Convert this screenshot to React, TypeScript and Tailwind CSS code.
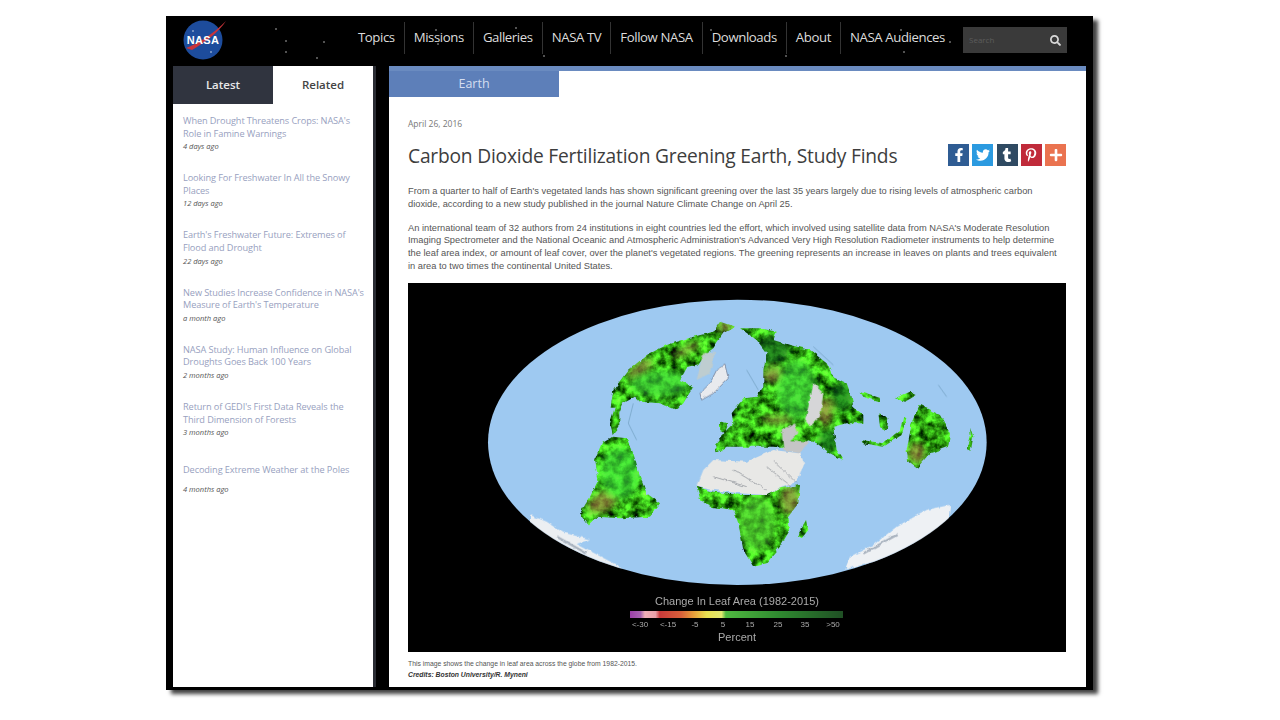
import { FaFacebookF, FaTwitter, FaTumblr, FaPinterestP, FaPlus, FaSearch } from 'react-icons/fa';

const navItems = ['Topics', 'Missions', 'Galleries', 'NASA TV', 'Follow NASA', 'Downloads', 'About', 'NASA Audiences'];

const related = [
  { title: "When Drought Threatens Crops: NASA's Role in Famine Warnings", when: '4 days ago' },
  { title: 'Looking For Freshwater In All the Snowy Places', when: '12 days ago' },
  { title: "Earth's Freshwater Future: Extremes of Flood and Drought", when: '22 days ago' },
  { title: "New Studies Increase Confidence in NASA's Measure of Earth's Temperature", when: 'a month ago' },
  { title: 'NASA Study: Human Influence on Global Droughts Goes Back 100 Years', when: '2 months ago' },
  { title: "Return of GEDI's First Data Reveals the Third Dimension of Forests", when: '3 months ago' },
];

const stars = [
  [110, 13], [120, 25], [158, 26], [120, 36], [151, 42], [270, 14], [272, 28], [350, 12], [378, 40], [545, 14], [553, 29], [735, 14], [738, 36], [784, 26], [620, 40],
];

function Logo() {
  return (
    <svg width="46" height="42" viewBox="0 0 46 42">
      <circle cx="20" cy="22" r="19.5" fill="#1d4c9c" />
      <circle cx="10" cy="13" r="0.7" fill="#fff" />
      <circle cx="28" cy="34" r="0.7" fill="#fff" />
      <path d="M3 30 C14 26 30 16 43 3 C36 14 22 24 9 32 Z" fill="#c9343a" />
      <text x="20" y="26" textAnchor="middle" fontSize="11" fontWeight="700" fill="#fff" fontFamily="Liberation Sans, sans-serif" letterSpacing="0.3">NASA</text>
    </svg>
  );
}

function Nav() {
  return (
    <div className="relative flex h-[50px] items-center bg-black pb-[7px] pl-[17px] pr-[26px]">
      <svg className="absolute inset-0" width="920" height="50">
        {stars.map(([x, y]) => (
          <circle key={`${x}-${y}`} cx={x} cy={y} r="0.8" fill="#bbb" />
        ))}
      </svg>
      <div className="relative mt-[3px]"><Logo /></div>
      <nav className="relative ml-auto flex items-center">
        {navItems.map((item, i) => (
          <a
            key={item}
            className={`flex h-[32px] items-center px-[9px] font-['Open_Sans',sans-serif] text-[13.2px] tracking-[-0.4px] text-[#dcdcdc] ${i > 0 ? 'border-l border-[#333]' : ''}`}
          >
            {item}
          </a>
        ))}
      </nav>
      <div className="relative ml-[9px] mt-[5px] flex h-[26px] w-[104px] items-center justify-between bg-[#3a3a3a] pl-[6px] pr-[6px]">
        <span className="font-['Open_Sans',sans-serif] text-[8px] text-[#5c5c5c]">Search</span>
        <FaSearch className="text-[11px] text-[#d8d8d8]" />
      </div>
    </div>
  );
}

function Sidebar() {
  return (
    <aside className="flex w-[200px] flex-col bg-white font-['Open_Sans',sans-serif]">
      <div className="flex h-[38px] text-[11.5px]">
        <div className="flex w-[100px] items-center justify-center bg-[#30343f] font-semibold text-[#e8e8e8]">Latest</div>
        <div className="flex w-[100px] items-center justify-center font-semibold text-[#444]">Related</div>
      </div>
      <ul className="flex flex-col gap-[20px] pl-[10px] pr-[8px] pt-[11px]">
        {related.map(r => (
          <li key={r.title}>
            <p className="text-[9.2px] leading-[12.6px] tracking-[-0.1px] text-[#989fc0]">{r.title}</p>
            <p className="text-[7.5px] italic leading-[12px] text-[#555]">{r.when}</p>
          </li>
        ))}
        <li className="pt-[6px]">
          <p className="text-[9.2px] leading-[12.6px] tracking-[-0.1px] text-[#989fc0]">Decoding Extreme Weather at the Poles</p>
          <p className="mt-[6px] text-[7.5px] italic leading-[12px] text-[#555]">4 months ago</p>
        </li>
      </ul>
    </aside>
  );
}

function LeafMap() {
  const legendLabels: [number, string][] = [[232, '<-30'], [260, '<-15'], [287, '-5'], [315, '5'], [342, '15'], [370, '25'], [397, '35'], [425, '>50']];
  return (
    <svg className="block" width="658" height="369" viewBox="0 0 658 369">
      <defs>
        <filter id="rough" x="-5%" y="-5%" width="110%" height="110%">
          <feTurbulence type="fractalNoise" baseFrequency="0.05" numOctaves="3" seed="4" result="n" />
          <feDisplacementMap in="SourceGraphic" in2="n" scale="12" xChannelSelector="R" yChannelSelector="G" />
          <feGaussianBlur stdDeviation="1" />
        </filter>
        <filter id="mottle" colorInterpolationFilters="sRGB" x="0" y="0" width="100%" height="100%">
          <feTurbulence type="fractalNoise" baseFrequency="0.035" numOctaves="4" seed="9" />
          <feColorMatrix values="0 0.8 0 0 -0.2  0 1.9 0 0 -0.28  0 0.5 0 0 -0.17  0 0 0 0 1" />
          <feGaussianBlur stdDeviation="1.5" />
        </filter>
        <filter id="soft"><feGaussianBlur stdDeviation="9" /></filter>
        <clipPath id="globe"><ellipse cx="772" cy="457" rx="748" ry="428" /></clipPath>
        <mask id="land" maskUnits="userSpaceOnUse" x="0" y="0" width="1560" height="930">
          <g fill="#fff" filter="url(#rough)">
            <path d="M765 110 L720 95 L700 125 L640 140 L560 165 L500 195 L440 245 L400 300 L392 350 L405 350 L390 400 L398 435 L418 410 L418 370 L430 340 L465 320 L480 335 L540 340 L590 360 L610 340 L640 290 L600 270 L620 235 L655 225 L680 190 L700 175 L730 130 Z" />
            <path d="M400 440 L440 445 L460 490 L480 560 L500 610 L540 640 L510 680 L420 685 L350 680 L325 705 L300 670 L330 620 L355 570 L345 510 L365 460 Z" />
            <path d="M780 115 L840 115 L890 125 L880 150 L930 165 L990 180 L1040 220 L1060 260 L1100 280 L1115 320 L1120 350 L1150 375 L1150 400 L1100 400 L1060 410 L1070 480 L1090 510 L1050 490 L1010 460 L985 450 L960 480 L880 470 L830 470 L790 470 L740 470 L710 490 L705 465 L740 420 L760 400 L755 370 L790 325 L830 320 L850 290 L850 240 L860 190 L830 150 Z" />
            <path d="M650 590 L700 605 L780 615 L860 615 L900 595 L960 585 L955 640 L925 680 L930 720 L900 770 L860 820 L820 830 L790 780 L775 700 L760 660 L690 650 L660 625 Z" />
            <path d="M1320 345 L1380 375 L1410 430 L1405 470 L1350 490 L1310 535 L1285 515 L1280 480 L1295 400 Z" />
            <path d="M978 690 L985 720 L965 745 L952 735 Z" />
            <path d="M1245 325 L1290 305 L1310 315 L1275 335 Z" />
            <path d="M1195 370 L1225 385 L1220 420 L1200 410 Z" />
            <path d="M1145 450 L1210 460 L1260 420 L1270 380 L1280 385 L1265 435 L1210 470 L1150 460 Z" />
            <path d="M1140 305 L1200 325 L1200 335 L1150 320 Z" />
            <path d="M1470 410 L1480 440 L1472 485 L1463 480 L1472 440 Z" />
            <path d="M720 395 L745 400 L735 430 L720 420 Z" />
          </g>
        </mask>
      </defs>
      <rect width="658" height="369" fill="#000" />
      <g transform="translate(72 7) scale(0.33333)">
        <ellipse cx="772" cy="457" rx="748" ry="428" fill="#9ec9f1" />
        <g mask="url(#land)">
          <rect width="1560" height="930" filter="url(#mottle)" />
          <g filter="url(#soft)" opacity="0.6">
            <ellipse cx="480" cy="235" rx="45" ry="16" fill="#a5674a" transform="rotate(-35 480 235)" />
            <ellipse cx="735" cy="110" rx="25" ry="16" fill="#a5674a" />
            <ellipse cx="620" cy="180" rx="45" ry="12" fill="#a39a4a" transform="rotate(-30 620 180)" />
            <ellipse cx="370" cy="635" rx="50" ry="28" fill="#b0704a" transform="rotate(-30 370 635)" />
            <ellipse cx="880" cy="255" rx="32" ry="22" fill="#a5674a" />
            <ellipse cx="1035" cy="365" rx="22" ry="40" fill="#b0704a" />
            <ellipse cx="930" cy="630" rx="28" ry="45" fill="#a5744a" />
            <ellipse cx="1310" cy="490" rx="25" ry="32" fill="#b0784a" />
            <ellipse cx="890" cy="390" rx="45" ry="14" fill="#a39a4a" />
            <ellipse cx="880" cy="180" rx="50" ry="45" fill="#0d4f1a" />
            <ellipse cx="1085" cy="320" rx="35" ry="45" fill="#0d5f1a" />
            <ellipse cx="1045" cy="450" rx="30" ry="36" fill="#0d5f1a" />
            <ellipse cx="420" cy="550" rx="60" ry="80" fill="#3fe03f" />
            <ellipse cx="830" cy="700" rx="55" ry="80" fill="#58d038" />
            <ellipse cx="540" cy="280" rx="90" ry="40" fill="#40d040" />
            <ellipse cx="950" cy="300" rx="60" ry="90" fill="#40d040" />
          </g>
        </g>
        <g clipPath="url(#globe)">
          <g filter="url(#rough)">
            <path d="M650 590 L670 540 L700 510 L800 515 L880 480 L960 490 L975 520 L950 575 L900 595 L860 615 L780 610 L700 600 Z" fill="#e8e8e6" />
            <path d="M700 560 L800 590 M760 540 L860 600 M860 530 L935 590 M880 510 L950 580" stroke="#7b8088" strokeWidth="3" fill="none" opacity="0.6" />
            <path d="M905 420 L945 400 L955 430 L930 450 L990 455 L960 490 L910 480 Z" fill="#c4c5c6" />
            <path d="M1000 280 L1030 310 L1020 380 L990 410 L975 390 L990 330 Z" fill="#d6d6d8" />
            <path d="M670 190 L705 185 L690 250 L650 270 L660 225 Z" fill="#c8cdc4" opacity="0.75" />
            <path d="M735 225 L745 265 L700 310 L665 330 L660 310 L690 280 L710 240 Z" fill="#e8eaee" stroke="#66718a" strokeWidth="2" />
            <path d="M150 675 L200 695 L250 728 L330 748 L290 762 L430 835 L300 830 L150 720 Z" fill="#eceff2" />
            <path d="M1410 645 L1340 660 L1250 710 L1180 765 L1110 800 L1095 838 L1400 760 Z" fill="#eef1f4" />
            <path d="M1150 790 L1250 735 M230 740 L320 790" stroke="#aab4c0" strokeWidth="7" fill="none" />
          </g>
        </g>
        <path d="M460 340 L445 400 L470 450 M1375 285 L1400 320 M1000 170 L1060 225 M800 240 L835 300" stroke="#5e8aa8" strokeWidth="2" fill="none" opacity="0.7" />
      </g>
      <g fontFamily="Liberation Sans, sans-serif" fill="#aaaaaa" textAnchor="middle">
        <text x="329" y="322" fontSize="11">Change In Leaf Area (1982-2015)</text>
        <text x="329" y="358" fontSize="11">Percent</text>
        {legendLabels.map(([x, t]) => (
          <text key={t} x={x} y="344" fontSize="8">{t}</text>
        ))}
      </g>
      <defs>
        <linearGradient id="scale">
          <stop offset="0" stopColor="#9c3fa8" />
          <stop offset="0.05" stopColor="#a864b0" />
          <stop offset="0.07" stopColor="#f0b0b8" />
          <stop offset="0.12" stopColor="#e8a0a8" />
          <stop offset="0.14" stopColor="#c83a3a" />
          <stop offset="0.24" stopColor="#d8603a" />
          <stop offset="0.3" stopColor="#e8a03a" />
          <stop offset="0.36" stopColor="#e8e050" />
          <stop offset="0.43" stopColor="#e0e870" />
          <stop offset="0.45" stopColor="#4fb840" />
          <stop offset="0.7" stopColor="#2f8a30" />
          <stop offset="1" stopColor="#1f4f24" />
        </linearGradient>
      </defs>
      <rect x="222" y="328" width="213" height="7" fill="url(#scale)" />
    </svg>
  );
}

function Share() {
  const btn = 'flex h-[22px] w-[21px] items-center justify-center text-white text-[14px]';
  return (
    <div className="flex gap-[3.25px]">
      <span className={`${btn} bg-[#2f5c93]`}><FaFacebookF /></span>
      <span className={`${btn} bg-[#2b9ae0]`}><FaTwitter /></span>
      <span className={`${btn} bg-[#2f4a62]`}><FaTumblr /></span>
      <span className={`${btn} bg-[#c02a3a]`}><FaPinterestP /></span>
      <span className={`${btn} bg-[#ea7350] text-[9px]`}><FaPlus /></span>
    </div>
  );
}

function Article() {
  return (
    <main className="flex w-[697px] flex-col border-t-[5px] border-[#6a8bc0] bg-white">
      <div className="flex h-[26px] w-[170px] items-center justify-center bg-[#5d7fb9] font-['Open_Sans',sans-serif] text-[12.5px] text-[#d4def0]">Earth</div>
      <div className="flex flex-col pl-[19px] pr-[20px]">
        <p className="mt-[21px] font-['Open_Sans',sans-serif] text-[8.5px] leading-[12px] text-[#777]">April 26, 2016</p>
        <div className="mt-[12px] flex h-[26px] items-center justify-between">
          <h1 className="pt-[2px] font-['Open_Sans',sans-serif] text-[19.2px] tracking-[-0.2px] text-[#3d3d3d]">Carbon Dioxide Fertilization Greening Earth, Study Finds</h1>
          <Share />
        </div>
        <div className="mt-[17px] flex flex-col gap-[11px] font-['Liberation_Sans',sans-serif] text-[9.3px] leading-[12.8px] text-[#555]">
          <p>From a quarter to half of Earth's vegetated lands has shown significant greening over the last 35 years largely due to rising levels of atmospheric carbon dioxide, according to a new study published in the journal Nature Climate Change on April 25.</p>
          <p>An international team of 32 authors from 24 institutions in eight countries led the effort, which involved using satellite data from NASA's Moderate Resolution Imaging Spectrometer and the National Oceanic and Atmospheric Administration's Advanced Very High Resolution Radiometer instruments to help determine the leaf area index, or amount of leaf cover, over the planet's vegetated regions. The greening represents an increase in leaves on plants and trees equivalent in area to two times the continental United States.</p>
        </div>
        <div className="mt-[10px]"><LeafMap /></div>
        <div className="mt-[6px] font-['Liberation_Sans',sans-serif] text-[6.8px] leading-[11px] text-[#555]">
          <p>This image shows the change in leaf area across the globe from 1982-2015.</p>
          <p className="font-bold italic text-[#333]">Credits: Boston University/R. Myneni</p>
        </div>
      </div>
    </main>
  );
}

export default function App() {
  return (
    <div className="h-[720px] w-[1280px] overflow-hidden bg-white pl-[166px] pt-[16px] blur-[0.6px]">
      <div className="flex h-[674px] w-[927px] flex-col bg-black shadow-[5px_4px_4px_rgba(0,0,0,0.75)]">
        <Nav />
        <div className="flex h-[621px] pl-[7px]">
          <Sidebar />
          <div className="w-[3px] bg-[#2a2c33]" />
          <div className="w-[13px]" />
          <Article />
        </div>
      </div>
    </div>
  );
}
